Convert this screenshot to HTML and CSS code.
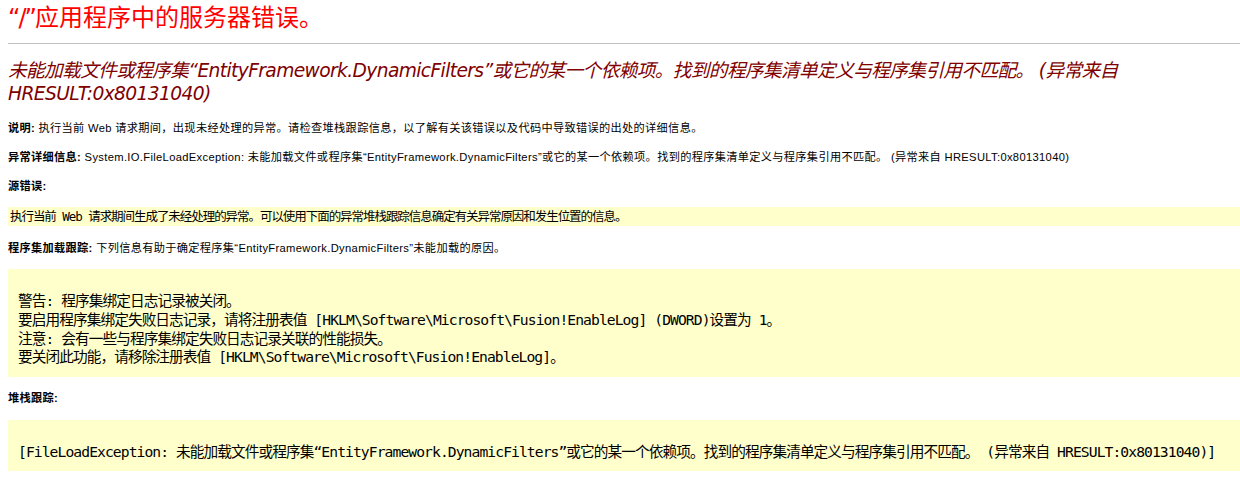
FILE: index.html
```html
<!DOCTYPE html>
<html lang="zh-CN">
<head>
<meta charset="utf-8">
<title>未能加载文件或程序集“EntityFramework.DynamicFilters”或它的某一个依赖项。</title>
<link rel="stylesheet" href="styles.css">
</head>
<body>
<div class="page">
  <h1 class="title"><span class="title-path">“/”</span>应用程序中的服务器错误。</h1>
  <hr class="rule">
  <h2 class="message">未能加载文件或程序集“EntityFramework.DynamicFilters”或它的某一个依赖项。找到的程序集清单定义与程序集引用不匹配。 (异常来自 HRESULT:0x80131040)</h2>
  <div class="details">
    <p class="line"><b class="label">说明:</b> 执行当前 Web 请求期间，出现未经处理的异常。请检查堆栈跟踪信息，以了解有关该错误以及代码中导致错误的出处的详细信息。</p>
    <p class="line"><b class="label">异常详细信息:</b> System.IO.FileLoadException: 未能加载文件或程序集“EntityFramework.DynamicFilters”或它的某一个依赖项。找到的程序集清单定义与程序集引用不匹配。 (异常来自 HRESULT:0x80131040)</p>
    <p class="line"><b class="label">源错误:</b></p>
    <div class="box box-source"><code class="source-code">执行当前 Web 请求期间生成了未经处理的异常。可以使用下面的异常堆栈跟踪信息确定有关异常原因和发生位置的信息。</code></div>
    <p class="line"><b class="label">程序集加载跟踪:</b> 下列信息有助于确定程序集“EntityFramework.DynamicFilters”未能加载的原因。</p>
    <div class="box box-pre"><pre class="trace">&#8203;
警告: 程序集绑定日志记录被关闭。
要启用程序集绑定失败日志记录，请将注册表值 [HKLM\Software\Microsoft\Fusion!EnableLog] (DWORD)设置为 1。
注意: 会有一些与程序集绑定失败日志记录关联的性能损失。
要关闭此功能，请移除注册表值 [HKLM\Software\Microsoft\Fusion!EnableLog]。
</pre></div>
    <p class="line"><b class="label">堆栈跟踪:</b></p>
    <div class="box box-pre"><pre class="trace">&#8203;
[FileLoadException: 未能加载文件或程序集“EntityFramework.DynamicFilters”或它的某一个依赖项。找到的程序集清单定义与程序集引用不匹配。 (异常来自 HRESULT:0x80131040)]
</pre></div>
  </div>
</div>
</body>
</html>
```

FILE: styles.css
```css
html, body {
  margin: 0;
  padding: 0;
  background: #ffffff;
}

.page {
  padding: 0 0 0 8px;
  font-family: "DejaVu Sans", "Noto Sans CJK SC", sans-serif;
  color: #000000;
}

.title {
  margin: 0;
  padding-top: 4px;
  font-size: 24px;
  line-height: 28px;
  font-weight: normal;
  color: #ff0000;
  font-family: "DejaVu Sans", "Noto Sans CJK SC", sans-serif;
}

.title-path {
  letter-spacing: -2px;
}

.rule {
  margin: 11px 0 0 0;
  border: none;
  height: 1px;
  background: #c0c0c0;
}

.message {
  margin: 16px 0 0 0;
  font-size: 18.67px;
  line-height: 22.5px;
  font-weight: normal;
  font-style: italic;
  color: #800000;
  letter-spacing: -0.62px;
  font-family: "DejaVu Sans", "Noto Sans CJK SC", sans-serif;
}

.details {
  display: flex;
  flex-direction: column;
  gap: 14.25px;
  margin-top: 16px;
  font-family: "Liberation Sans", "Noto Sans CJK SC", sans-serif;
  font-size: 11.2px;
  line-height: 14.5px;
  letter-spacing: 0.33px;
}

.line {
  margin: 0;
  white-space: nowrap;
}

.label {
  font-weight: bold;
  color: #000000;
}

.box {
  background: #ffffcc;
  letter-spacing: normal;
}

.box-source {
  height: 19px;
  display: flex;
  align-items: center;
  padding-left: 2px;
}

.source-code {
  font-family: "DejaVu Sans Mono", "Noto Sans CJK SC", monospace;
  font-size: 12.5px;
  line-height: 19px;
  letter-spacing: -1.05px;
}

.box-pre {
  padding: 4.5px 0 9.5px 10px;
}

.trace {
  margin: 0;
  font-family: "DejaVu Sans Mono", "Noto Sans CJK SC", monospace;
  font-size: 14.67px;
  line-height: 18.67px;
  letter-spacing: -0.92px;
  white-space: pre;
}
```
